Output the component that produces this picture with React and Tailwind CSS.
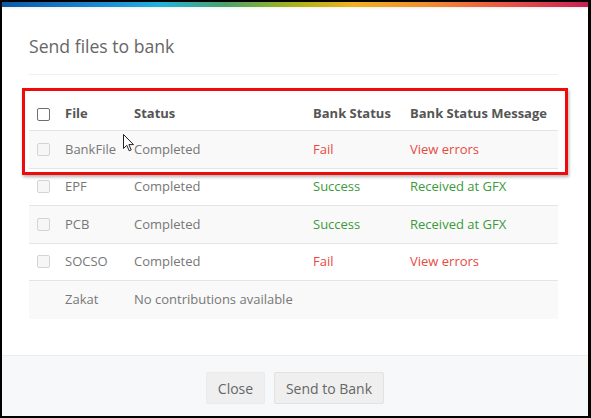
import React from 'react';

const rows = [
    { file: 'BankFile', status: 'Completed', bank: 'Fail', msg: 'View errors', ok: false, check: true },
    { file: 'EPF', status: 'Completed', bank: 'Success', msg: 'Received at GFX', ok: true, check: true },
    { file: 'PCB', status: 'Completed', bank: 'Success', msg: 'Received at GFX', ok: true, check: true },
    { file: 'SOCSO', status: 'Completed', bank: 'Fail', msg: 'View errors', ok: false, check: true },
    { file: 'Zakat', status: 'No contributions available', bank: '', msg: '', ok: true, check: false }
];

const Checkbox = ({ active }) => (
    <span
        className={
            active
                ? 'block w-[13px] h-[13px] rounded-[2px] border border-[#6f6f6f] bg-white'
                : 'block w-[13px] h-[13px] rounded-[2px] border border-[#d4d4d4] bg-[#f6f6f6]'
        }
    />
);

const App = () => {
    return (
        <div
            className="relative w-[591px] h-[418px] bg-black pl-[2px] pr-[3px] pt-[2px] pb-[2px] overflow-hidden"
            style={{ fontFamily: '"Open Sans", "Noto Sans", Arial, sans-serif' }}
        >
            <div className="flex flex-col h-full bg-white">
                {/* top colour strip */}
                <div className="h-[5px] shrink-0 bg-[linear-gradient(90deg,#0d58a8_0%,#1c8fd6_18%,#22b1de_27%,#4aa36a_38%,#a9b317_50%,#f2b01e_60%,#f28f2c_72%,#eb5446_86%,#c81f55_100%)]" />
                <div className="h-[3px] shrink-0 bg-gradient-to-b from-[#f2f2f2] to-white" />

                <div className="flex-1 pl-[27px] pr-[30px]">
                    <h1 className="pt-[24px] text-[17.6px] leading-[24px] text-[#666]">Send files to bank</h1>
                    <div className="mt-[16px] h-px bg-[#f0f0f0]" />

                    {/* table */}
                    <div className="mt-[19px] w-[529px] text-[13px] text-[#777]">
                        <div className="flex items-center h-[37px] pt-[4px] border-b border-[#e4e4e4] font-bold text-[#555]">
                            <div className="w-[28px] pl-[8px]"><Checkbox active /></div>
                            <div className="w-[69px] pl-[8px]">File</div>
                            <div className="w-[179px] pl-[8px]">Status</div>
                            <div className="w-[97px] pl-[8px]">Bank Status</div>
                            <div className="flex-1 pl-[8px]">Bank Status Message</div>
                        </div>
                        {rows.map((r, i) => (
                            <div
                                key={r.file}
                                className={
                                    'flex items-center h-[37.5px] ' +
                                    (i % 2 === 0 ? 'bg-[#f9f9f9] ' : 'bg-white ') +
                                    (i < rows.length - 1 ? 'border-b border-[#e4e4e4]' : '')
                                }
                            >
                                <div className="w-[28px] pl-[8px]">{r.check && <Checkbox />}</div>
                                <div className="w-[69px] pl-[8px]">{r.file}</div>
                                <div className="w-[179px] pl-[8px] whitespace-nowrap">{r.status}</div>
                                <div className={'w-[97px] pl-[8px] ' + (r.ok ? 'text-[#3b9a3b]' : 'text-[#e8493f]')}>{r.bank}</div>
                                <div className={'flex-1 pl-[8px] ' + (r.ok ? 'text-[#3b9a3b]' : 'text-[#e8493f]')}>{r.msg}</div>
                            </div>
                        ))}
                    </div>
                </div>

                {/* footer */}
                <div className="h-[61px] shrink-0 border-t border-[#ececec] bg-[#f7f8fa] flex items-start justify-center gap-[9px] pt-[16px]">
                    <button className="h-[32px] w-[59px] rounded-[2px] bg-[#efefef] border border-[#ebebeb] text-[14px] text-[#666]">Close</button>
                    <button className="h-[32px] w-[110px] rounded-[2px] bg-[#efefef] border border-[#e2e2e2] text-[14px] text-[#666]">Send to Bank</button>
                </div>
            </div>

            {/* annotation box */}
            <div className="absolute left-[22px] top-[88px] w-[546px] h-[87px] border-[3px] border-[#ee0b0b] shadow-[1px_2px_3px_rgba(0,0,0,0.3)] pointer-events-none" />

            {/* mouse cursor */}
            <svg className="absolute left-[123px] top-[134px]" width="12" height="18" viewBox="0 0 12 18">
                <path d="M0.5 0.5 L0.5 14.5 L3.8 11.3 L6.2 16.8 L8.2 15.9 L5.9 10.6 L10.5 10.6 Z" fill="#fff" stroke="#222" strokeWidth="1" strokeLinejoin="round" />
            </svg>
        </div>
    );
};

export default App;
